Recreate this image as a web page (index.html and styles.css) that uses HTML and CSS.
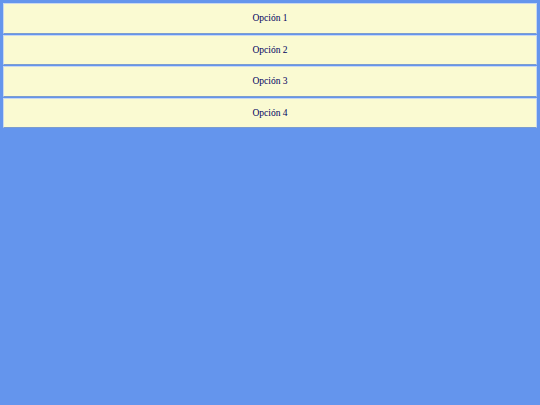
FILE: index.html
```html
<!DOCTYPE html>
<html>
<head>
<meta charset="utf-8">
<link rel="stylesheet" href="styles.css">
</head>
<body>
<ul class="menu">
  <li class="item">Opción 1</li>
  <li class="item">Opción 2</li>
  <li class="item">Opción 3</li>
  <li class="item">Opción 4</li>
</ul>
</body>
</html>
```

FILE: styles.css
```css
html, body {
  margin: 0;
  padding: 0;
  background: #6495ed;
}
.menu {
  list-style: none;
  margin: 0;
  padding: 3px;
  display: flex;
  flex-direction: column;
  gap: 1px;
}
.item {
  background: #fafad2;
  border: 1px solid #c8d8f0;
  border-bottom-color: #7a9cd0;
  height: 27.5px;
  padding-top: 1px;
  line-height: 27.5px;
  text-align: center;
  font-family: "Liberation Serif", serif;
  font-size: 9.5px;
  color: #000060;
}
```
